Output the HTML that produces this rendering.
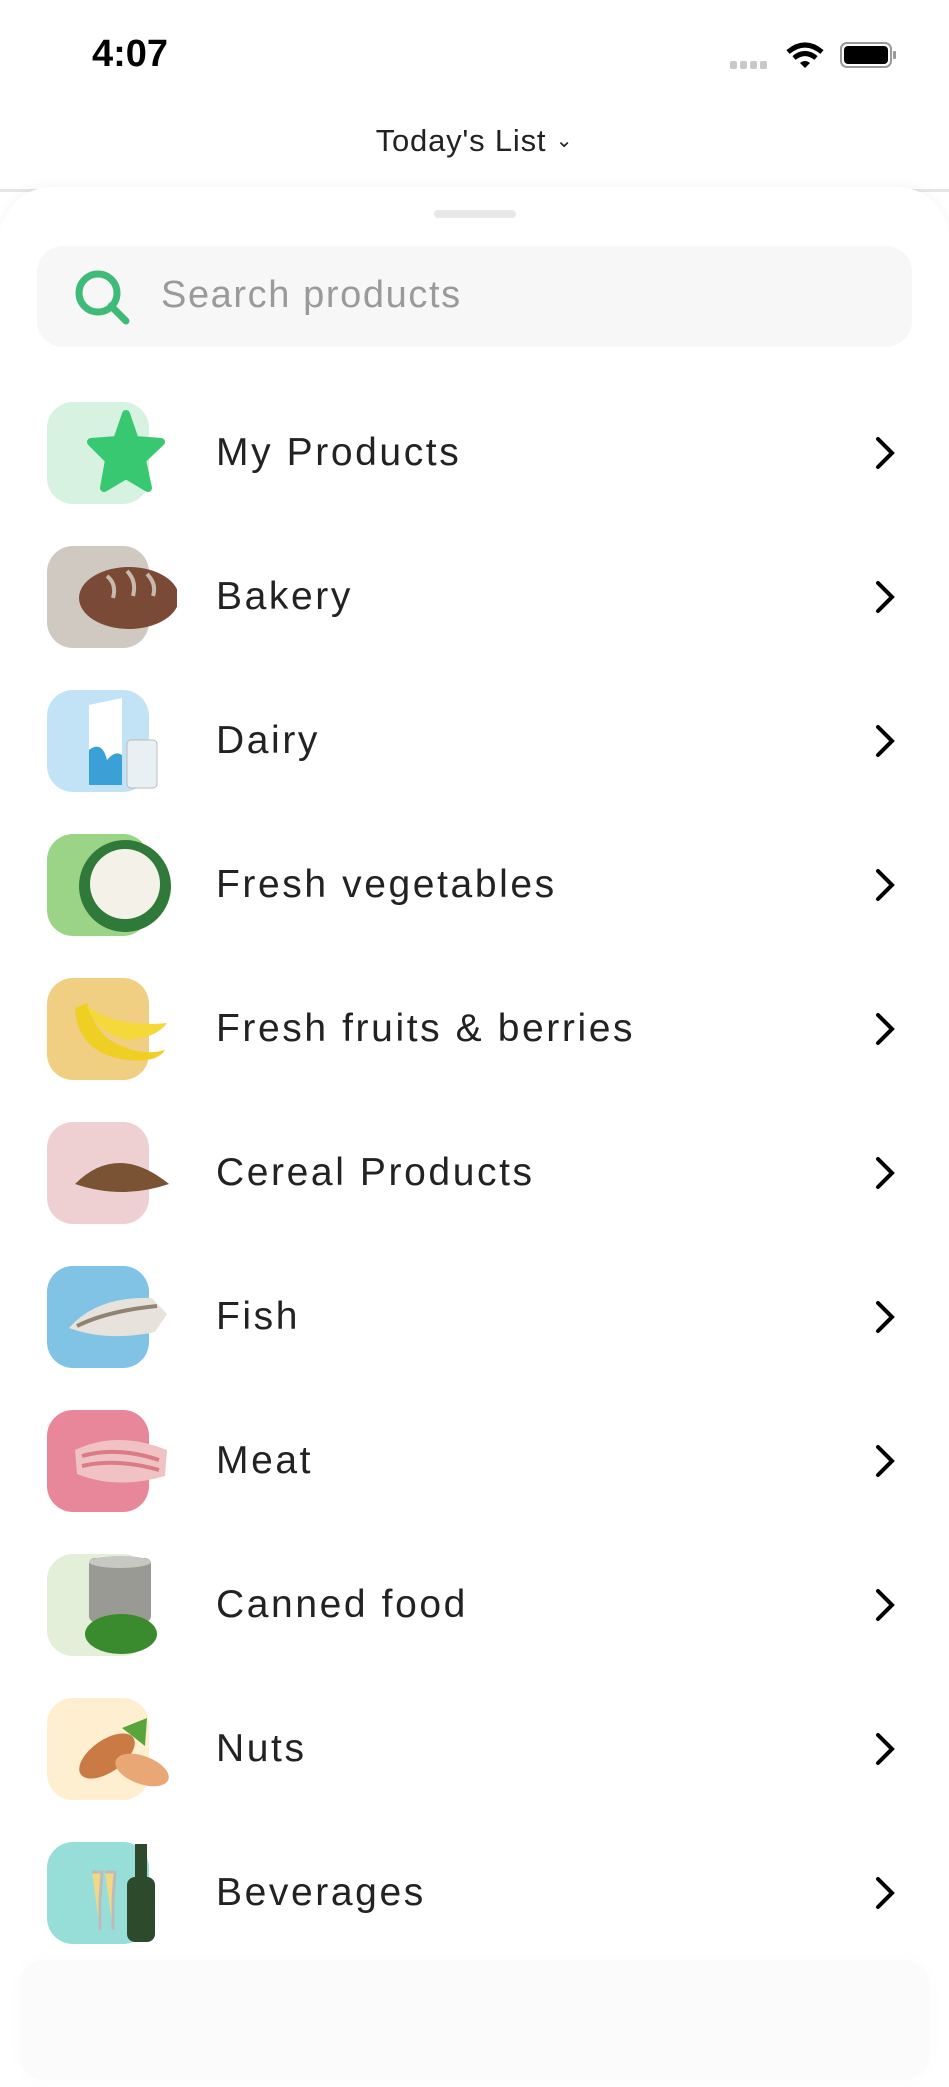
<!DOCTYPE html>
<html><head><meta charset="utf-8"><style>
*{margin:0;padding:0;box-sizing:border-box}
body{width:949px;height:2053px;background:#fff;position:relative;overflow:hidden;font-family:"Liberation Sans",sans-serif;color:#222}
.abs{position:absolute}
.row{position:absolute;left:0;width:949px;height:102px}
.box{position:absolute;left:47px;top:0;width:102px;height:102px;border-radius:26px}
.ic{position:absolute;left:47px;top:0}
.lbl{position:absolute;left:216px;top:0;line-height:102px;font-size:39px;letter-spacing:2.6px;color:#222}
.chev{position:absolute;left:872px;top:34px}
</style></head><body>
<div class="abs" style="left:92px;top:33px;font-size:38px;font-weight:bold;color:#000">4:07</div>
<svg class="abs" style="left:730px;top:38px" width="170" height="36" viewBox="0 0 170 36">
<g fill="#c8c8c8"><rect x="0" y="23" width="7" height="8" rx="2"/><rect x="10" y="23" width="7" height="8" rx="2"/><rect x="20" y="23" width="7" height="8" rx="2"/><rect x="30" y="23" width="7" height="8" rx="2"/></g>
<path d="M58 14 Q75 0 92 14" stroke="#000" stroke-width="5" fill="none"/><path d="M64 20 Q75 11 86 20" stroke="#000" stroke-width="5" fill="none"/><path d="M70 25 L75 30 L80 25 Q75 21 70 25Z" fill="#000"/>
<rect x="111" y="5" width="50" height="24" rx="6" fill="none" stroke="#999" stroke-width="2"/><rect x="114" y="8" width="44" height="18" rx="4" fill="#000"/><rect x="163" y="13" width="3" height="8" rx="1" fill="#999"/>
</svg>
<div class="abs" style="left:0;top:123px;width:949px;text-align:center;font-size:31px;letter-spacing:0.8px;color:#222">Today's List <span style="font-size:20px;position:relative;top:-4px">&#8964;</span></div>
<div class="abs" style="left:0;top:189px;width:949px;height:3px;background:#e6e6e6"></div>
<div class="abs" style="left:0;top:187px;width:949px;height:1900px;background:#fff;border-radius:52px 52px 0 0;box-shadow:0 -4px 10px rgba(0,0,0,0.03)"></div>
<div class="abs" style="left:434px;top:210px;width:82px;height:8px;border-radius:4px;background:#e8e8e8"></div>
<div class="abs" style="left:37px;top:246px;width:875px;height:101px;border-radius:26px;background:#f7f7f7"></div>
<svg class="abs" style="left:73px;top:268px" width="60" height="58" viewBox="0 0 60 58"><circle cx="25" cy="25" r="19" stroke="#3fbb78" stroke-width="7" fill="none"/><path d="M38 38 L53 53" stroke="#3fbb78" stroke-width="7" stroke-linecap="round"/></svg>
<div class="abs" style="left:161px;top:274px;font-size:38px;letter-spacing:1.6px;color:#9a9a9a">Search products</div>

<div class="row" style="top:402px"><div class="box" style="background:#d8f2e2"></div>
<svg class="ic" width="130" height="102"><path d="M79 12 L88 38 L114 40 L95 58 L101 86 L79 73 L57 86 L62 58 L44 40 L70 38Z" fill="#38c872" stroke="#38c872" stroke-width="8" stroke-linejoin="round"/></svg>
<div class="lbl">My Products</div><svg class="chev" width="26" height="34"><path d="M6 3 L20 17 L6 31" stroke="#000" stroke-width="4" fill="none" stroke-linecap="round"/></svg></div>

<div class="row" style="top:546px"><div class="box" style="background:#cfc9c1"></div>
<svg class="ic" width="130" height="102"><ellipse cx="82" cy="52" rx="50" ry="31" fill="#7a4a36"/><path d="M60 30 Q70 38 66 52 M80 25 Q90 35 86 50 M100 28 Q110 38 106 50" stroke="#c9b8ad" stroke-width="4" fill="none"/></svg>
<div class="lbl">Bakery</div><svg class="chev" width="26" height="34"><path d="M6 3 L20 17 L6 31" stroke="#000" stroke-width="4" fill="none" stroke-linecap="round"/></svg></div>

<div class="row" style="top:690px"><div class="box" style="background:#c2e3f6"></div>
<svg class="ic" width="130" height="102"><path d="M42 15 L75 8 L75 95 L42 95Z" fill="#fff"/><path d="M42 60 Q55 50 60 70 Q68 60 75 65 L75 95 L42 95Z" fill="#3aa0d6"/><rect x="80" y="50" width="30" height="48" rx="4" fill="#e8f0f4" stroke="#bbb"/></svg>
<div class="lbl">Dairy</div><svg class="chev" width="26" height="34"><path d="M6 3 L20 17 L6 31" stroke="#000" stroke-width="4" fill="none" stroke-linecap="round"/></svg></div>

<div class="row" style="top:834px"><div class="box" style="background:#9bd487"></div>
<svg class="ic" width="130" height="102"><circle cx="78" cy="52" r="46" fill="#2f7a3a"/><circle cx="78" cy="50" r="35" fill="#f4f1e8"/></svg>
<div class="lbl">Fresh vegetables</div><svg class="chev" width="26" height="34"><path d="M6 3 L20 17 L6 31" stroke="#000" stroke-width="4" fill="none" stroke-linecap="round"/></svg></div>

<div class="row" style="top:978px"><div class="box" style="background:#f0ce82"></div>
<svg class="ic" width="130" height="102"><path d="M28 30 Q30 75 80 82 Q110 85 118 72 Q90 80 60 60 Q45 45 40 25Z" fill="#f0cf24"/><path d="M40 28 Q70 50 120 45 Q110 60 80 62 Q50 55 40 28Z" fill="#f5d83a"/></svg>
<div class="lbl">Fresh fruits &amp; berries</div><svg class="chev" width="26" height="34"><path d="M6 3 L20 17 L6 31" stroke="#000" stroke-width="4" fill="none" stroke-linecap="round"/></svg></div>

<div class="row" style="top:1122px"><div class="box" style="background:#efd0d2"></div>
<svg class="ic" width="130" height="102"><path d="M28 62 Q70 20 122 62 Q75 78 28 62Z" fill="#7a5335"/></svg>
<div class="lbl">Cereal Products</div><svg class="chev" width="26" height="34"><path d="M6 3 L20 17 L6 31" stroke="#000" stroke-width="4" fill="none" stroke-linecap="round"/></svg></div>

<div class="row" style="top:1266px"><div class="box" style="background:#80c3e5"></div>
<svg class="ic" width="130" height="102"><path d="M22 62 Q50 30 105 32 L120 48 L108 66 Q60 76 22 62Z" fill="#e7e3dc"/><path d="M30 60 Q60 45 110 40" stroke="#8f8474" stroke-width="4" fill="none"/></svg>
<div class="lbl">Fish</div><svg class="chev" width="26" height="34"><path d="M6 3 L20 17 L6 31" stroke="#000" stroke-width="4" fill="none" stroke-linecap="round"/></svg></div>

<div class="row" style="top:1410px"><div class="box" style="background:#e8869a"></div>
<svg class="ic" width="130" height="102"><path d="M28 40 Q70 20 120 40 L118 66 Q70 80 30 64Z" fill="#f1c2c4"/><path d="M35 46 Q70 36 112 50 M35 56 Q70 48 112 60" stroke="#d97c86" stroke-width="4" fill="none"/></svg>
<div class="lbl">Meat</div><svg class="chev" width="26" height="34"><path d="M6 3 L20 17 L6 31" stroke="#000" stroke-width="4" fill="none" stroke-linecap="round"/></svg></div>

<div class="row" style="top:1554px"><div class="box" style="background:#e3efd9"></div>
<svg class="ic" width="130" height="102"><rect x="42" y="4" width="62" height="64" rx="6" fill="#9a9a94"/><ellipse cx="73" cy="8" rx="31" ry="6" fill="#c8c8c2"/><ellipse cx="74" cy="80" rx="36" ry="20" fill="#3a8a2e"/></svg>
<div class="lbl">Canned food</div><svg class="chev" width="26" height="34"><path d="M6 3 L20 17 L6 31" stroke="#000" stroke-width="4" fill="none" stroke-linecap="round"/></svg></div>

<div class="row" style="top:1698px"><div class="box" style="background:#fdefcf"></div>
<svg class="ic" width="130" height="102"><ellipse cx="60" cy="58" rx="32" ry="16" transform="rotate(-35 60 58)" fill="#c97a45"/><ellipse cx="95" cy="72" rx="28" ry="14" transform="rotate(20 95 72)" fill="#e8a774"/><path d="M75 30 L100 20 L98 48Z" fill="#5aa43c"/></svg>
<div class="lbl">Nuts</div><svg class="chev" width="26" height="34"><path d="M6 3 L20 17 L6 31" stroke="#000" stroke-width="4" fill="none" stroke-linecap="round"/></svg></div>

<div class="row" style="top:1842px"><div class="box" style="background:#98ded8"></div>
<svg class="ic" width="130" height="102"><path d="M45 30 h10 l-2 28 v30 M58 30 h10 l-2 28 v30" stroke="#bbb" stroke-width="3" fill="#f0d887"/><rect x="80" y="35" width="28" height="65" rx="8" fill="#2e4a2c"/><rect x="88" y="2" width="12" height="40" fill="#2e4a2c"/></svg>
<div class="lbl">Beverages</div><svg class="chev" width="26" height="34"><path d="M6 3 L20 17 L6 31" stroke="#000" stroke-width="4" fill="none" stroke-linecap="round"/></svg></div>

<div class="abs" style="left:20px;top:1960px;width:909px;height:120px;border-radius:24px;background:#fbfbfb;box-shadow:0 0 20px rgba(0,0,0,0.02)"></div>
</body></html>
